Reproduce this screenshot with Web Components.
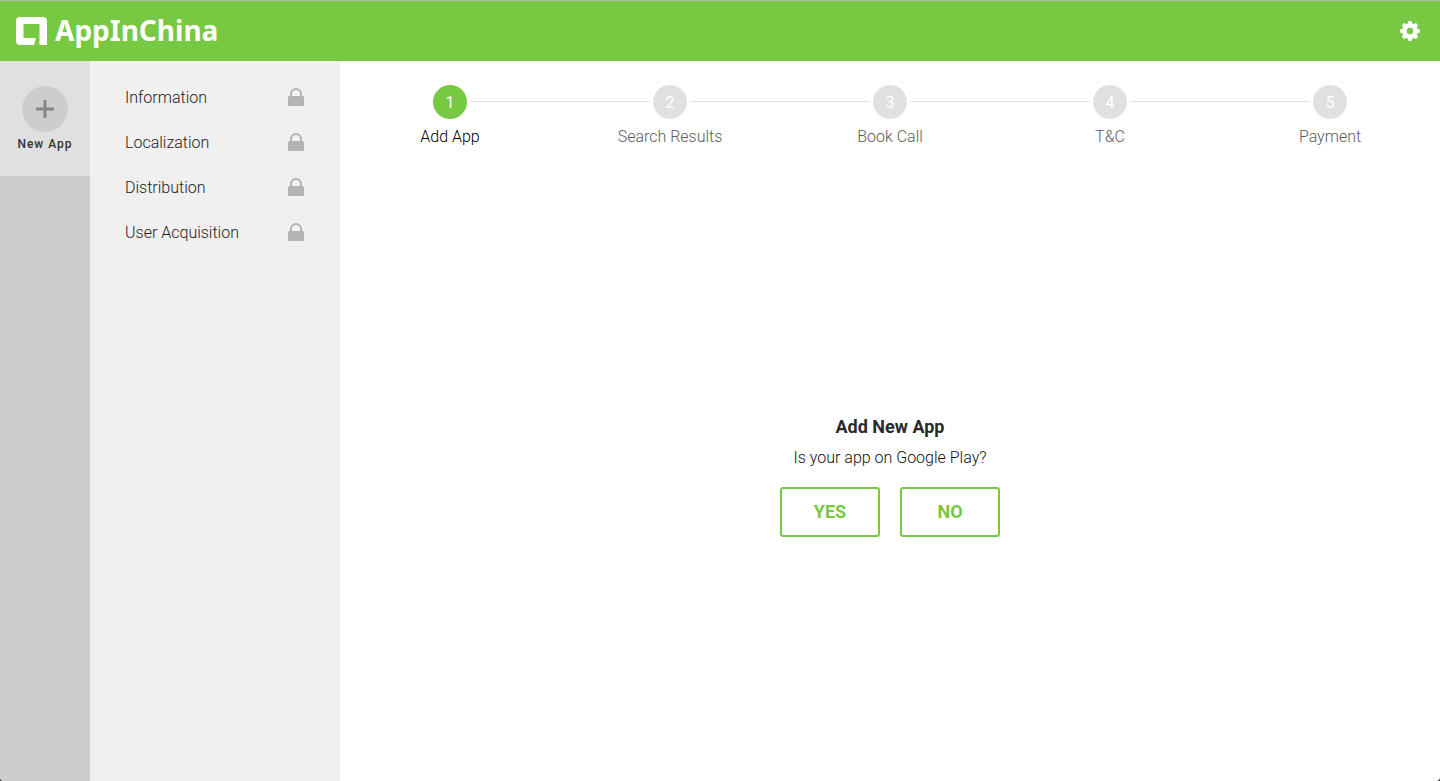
<!DOCTYPE html>
<html lang="en">
<head>
<meta charset="utf-8">
<title>AppInChina</title>
<style>
html { background: #3b2a20; }
body { margin: 0; font-family: Roboto, "Liberation Sans", sans-serif; font-size: 16px; font-weight: 300; line-height: 24px; color: #111; }
</style>
</head>
<body>
<app-shell>
  <top-bar slot="header"></top-bar>
  <app-rail slot="rail"></app-rail>
  <side-menu slot="menu">
    <menu-item>Information</menu-item>
    <menu-item>Localization</menu-item>
    <menu-item>Distribution</menu-item>
    <menu-item>User Acquisition</menu-item>
  </side-menu>
  <step-list>
    <step-item number="1" active>Add App</step-item>
    <step-item number="2">Search Results</step-item>
    <step-item number="3">Book Call</step-item>
    <step-item number="4">T&amp;C</step-item>
    <step-item number="5">Payment</step-item>
  </step-list>
  <app-prompt>
    <span slot="title">Add New App</span>
    <span slot="question">Is your app on Google Play?</span>
    <outline-button>YES</outline-button>
    <outline-button>NO</outline-button>
  </app-prompt>
</app-shell>
<script>
const define = (name, html, setup) => customElements.define(name, class extends HTMLElement {
  constructor() {
    super();
    const t = document.createElement('template');
    t.innerHTML = html;
    this.attachShadow({ mode: 'open' }).append(t.content.cloneNode(true));
  }
  connectedCallback() { if (setup) setup(this); }
});

define('app-shell', `
<style>
:host { display: flex; flex-direction: column; min-height: 100vh; box-sizing: border-box; background: #fff; border-top: 1px solid #b4b4b4; border-radius: 0 0 4px 4px; overflow: hidden; }
.body { display: flex; flex: 1; }
main { flex: 1; display: flex; flex-direction: column; }
</style>
<slot name="header"></slot>
<div class="body"><slot name="rail"></slot><slot name="menu"></slot><main><slot></slot></main></div>`);

define('top-bar', `
<style>
:host { display: block; background: #76c940; }
header { display: flex; align-items: center; justify-content: space-between; height: 60px; padding: 0 20px 0 16px; }
a { display: flex; align-items: center; gap: 8px; color: #fff; text-decoration: none; font: 700 28px/40px "Noto Sans", "Open Sans", sans-serif; }
a span { padding-bottom: 2px; }
button { display: flex; padding: 0; border: 0; background: none; color: #fff; }
svg { display: block; }
</style>
<header>
  <a href="#">
    <svg width="31" height="28" viewBox="0 0 31 28" fill="#fff" aria-hidden="true"><path fill-rule="evenodd" d="M4 0H27Q31 0 31 4V28H23.500V7H7.500V21H20L18 28H4Q0 28 0 24V4Q0 0 4 0Z"/></svg>
    <span>AppInChina</span>
  </a>
  <button type="button" aria-label="Settings">
    <svg width="20" height="20" viewBox="-10 -10 20 20" fill="#fff"><defs><path id="tooth" d="M-3.300 -6.500Q-2 -7.600 -1.800 -9.200Q-1.700 -10 -1 -10H1Q1.700 -10 1.800 -9.200Q2 -7.600 3.300 -6.500Z"/></defs><path fill-rule="evenodd" d="M0-7.500A7.500 7.500 0 1 1 0 7.500A7.500 7.500 0 1 1 0-7.500ZM0-3.200A3.200 3.200 0 1 0 0 3.200A3.200 3.200 0 1 0 0-3.200Z"/><use href="#tooth"/><use href="#tooth" transform="rotate(45)"/><use href="#tooth" transform="rotate(90)"/><use href="#tooth" transform="rotate(135)"/><use href="#tooth" transform="rotate(180)"/><use href="#tooth" transform="rotate(225)"/><use href="#tooth" transform="rotate(270)"/><use href="#tooth" transform="rotate(315)"/></svg>
  </button>
</header>`);

define('app-rail', `
<style>
:host { display: block; width: 90px; background: #cdcdcd; }
button { display: flex; flex-direction: column; align-items: center; gap: 4px; width: 100%; height: 115px; padding: 25px 0 0; border: 0; background: #e0e0e0; color: #333; font: 500 12px/16px Roboto, sans-serif; letter-spacing: 1px; }
.plus { display: flex; align-items: center; justify-content: center; width: 46px; height: 46px; border-radius: 50%; background: #cdcdcd; }
</style>
<button type="button"><span class="plus"><svg width="18" height="18" viewBox="0 0 18 18" stroke="#858585" stroke-width="3" aria-hidden="true"><path d="M9 0V18M0 9H18"/></svg></span><span>New App</span></button>`);

define('side-menu', `
<style>
:host { display: block; width: 250px; background: #f0f0f0; }
nav { display: flex; flex-direction: column; padding: 14px 35px; }
</style>
<nav><slot></slot></nav>`);

define('menu-item', `
<style>
:host { display: block; }
a { display: flex; align-items: center; justify-content: space-between; height: 45px; color: #222; text-decoration: none; }
</style>
<a href="#"><span><slot></slot></span><svg width="18" height="20" viewBox="0 0 18 20" aria-hidden="true"><path fill="none" stroke="#b3b3b3" stroke-width="2" d="M4 9V6A5 5 0 0 1 14 6V9"/><rect x="1" y="8" width="16" height="10" rx="1.500" fill="#b3b3b3"/></svg></a>`);

define('step-list', `
<style>
:host { display: block; padding-top: 24px; }
div { display: flex; }
</style>
<div role="list"><slot></slot></div>`);

define('step-item', `
<style>
:host { display: block; flex: 1; color: #5c5c5c; text-align: center; }
:host([active]) { color: #000; }
.row { display: flex; align-items: center; gap: 3px; }
.line { flex: 1; height: 1px; border-top: 1px solid #dfdfdf; }
:host(:first-child) .before, :host(:last-child) .after { border-color: transparent; }
.dot { width: 34px; height: 34px; border-radius: 50%; background: #e0e0e0; color: #fff; font-weight: 400; line-height: 36px; }
:host([active]) .dot { background: #76c940; }
.label { margin-top: 6px; }
</style>
<div class="row"><span class="line before"></span><span class="dot"></span><span class="line after"></span></div>
<div class="label"><slot></slot></div>`, el => {
  el.setAttribute('role', 'listitem');
  el.shadowRoot.querySelector('.dot').textContent = el.getAttribute('number');
});

define('app-prompt', `
<style>
:host { display: flex; flex: 1; flex-direction: column; align-items: center; justify-content: center; padding-top: 22px; }
h1 { margin: 0; font-size: 18px; font-weight: 700; line-height: 24px; color: #2a2a2a; }
p { margin: 7px 0 17px; }
div { display: flex; gap: 20px; }
</style>
<h1><slot name="title"></slot></h1>
<p><slot name="question"></slot></p>
<div><slot></slot></div>`);

define('outline-button', `
<style>
:host { display: block; }
button { width: 100px; height: 50px; padding: 0; border: 2px solid #76c940; border-radius: 3px; background: #fff; color: #76c940; font: 700 18px/24px Roboto, sans-serif; }
</style>
<button type="button"><slot></slot></button>`);
</script>
</body>
</html>
